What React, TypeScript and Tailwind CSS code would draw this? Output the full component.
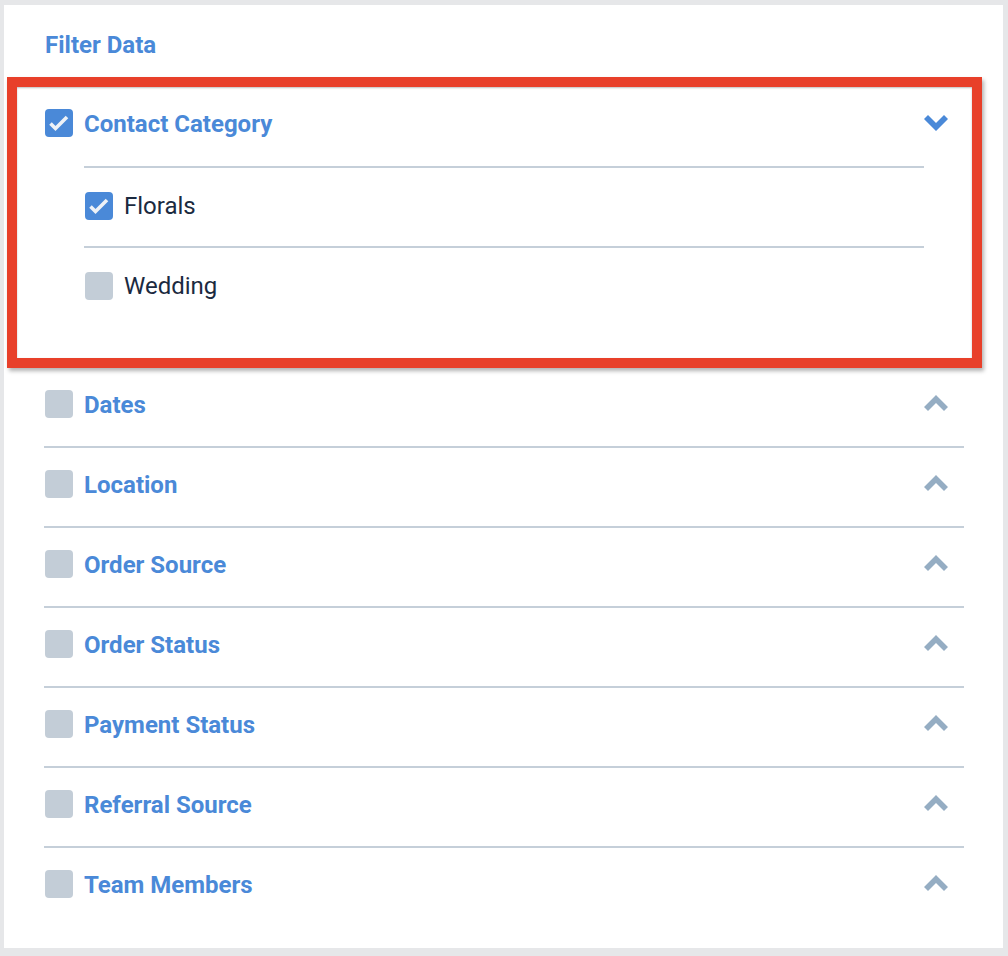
import React from "react";

const font = { fontFamily: "Roboto, 'Liberation Sans', sans-serif" };

function Check({ checked }: { checked: boolean }) {
  return (
    <div
      className={
        "w-[28px] h-[28px] rounded-[4px] shrink-0 flex items-center justify-center " +
        (checked ? "bg-[#4a89d8]" : "bg-[#c3cdd7]")
      }
    >
      {checked && (
        <svg width="28" height="28" viewBox="0 0 28 28">
          <polyline points="5.5,14.5 10.5,19.5 22,8" fill="none" stroke="#eef2f7" strokeWidth="3.6" />
        </svg>
      )}
    </div>
  );
}

function Chevron({ up }: { up: boolean }) {
  return (
    <svg width="24" height="16" viewBox="0 0 24 16" className="shrink-0">
      {up ? (
        <polygon points="12,0 24,12 20,16 12,8 4,16 0,12" fill="#95adc3" />
      ) : (
        <polygon points="12,16 24,4 20,0 12,8 4,0 0,4" fill="#4a89d8" />
      )}
    </svg>
  );
}

const sections = [
  "Dates",
  "Location",
  "Order Source",
  "Order Status",
  "Payment Status",
  "Referral Source",
  "Team Members",
];

export default function App() {
  return (
    <div className="min-h-[956px] bg-[#e6e7e9] pt-[5px] pl-[4px] pr-[5px] pb-[10px]" style={font}>
      <div className="relative bg-white pl-[40px] pr-[39px] pb-[20px]">
        <div className="h-[83px] pt-[26px] pl-[1px]">
          <h2 className="text-[24px] leading-[28px] font-bold text-[#4a89d8]">Filter Data</h2>
        </div>

        {/* Contact Category expanded */}
        <div className="pb-[42px]">
          <div className="h-[78px] pt-[21px] pl-[1px] flex items-start">
            <Check checked={true} />
            <span className="ml-[11px] mt-[1px] text-[24px] leading-[28px] font-bold text-[#4a89d8] flex-1">
              Contact Category
            </span>
            <div className="mr-[16px] mt-[6px]">
              <Chevron up={false} />
            </div>
          </div>
          <div className="ml-[40px] mr-[40px]">
            <div className="border-t-2 border-[#c5cfd9] h-[80px] pt-[24px] pl-[1px] flex items-start">
              <Check checked={true} />
              <span className="ml-[11px] text-[24px] leading-[28px] text-[#1b2a3f]">Florals</span>
            </div>
            <div className="border-t-2 border-[#c5cfd9] h-[80px] pt-[24px] pl-[1px] flex items-start">
              <Check checked={false} />
              <span className="ml-[11px] text-[24px] leading-[28px] text-[#1b2a3f]">Wedding</span>
            </div>
          </div>
        </div>

        {sections.map((s, i) => (
          <div
            key={s}
            className={
              "h-[80px] pt-[22px] pl-[1px] flex items-start " +
              (i < sections.length - 1 ? "border-b-2 border-[#c5cfd9]" : "")
            }
          >
            <Check checked={false} />
            <span className="ml-[11px] mt-[1px] text-[24px] leading-[28px] font-bold text-[#4a89d8] flex-1">{s}</span>
            <div className="mr-[16px] mt-[5px]">
              <Chevron up={true} />
            </div>
          </div>
        ))}

        {/* annotation overlay */}
        <div className="absolute left-[3px] top-[72px] w-[975px] h-[291px] border-[10px] border-[#e8402a] pointer-events-none shadow-[2px_3px_4px_rgba(0,0,0,0.3),inset_0_1px_2px_rgba(0,0,0,0.25)]" />
      </div>
    </div>
  );
}
